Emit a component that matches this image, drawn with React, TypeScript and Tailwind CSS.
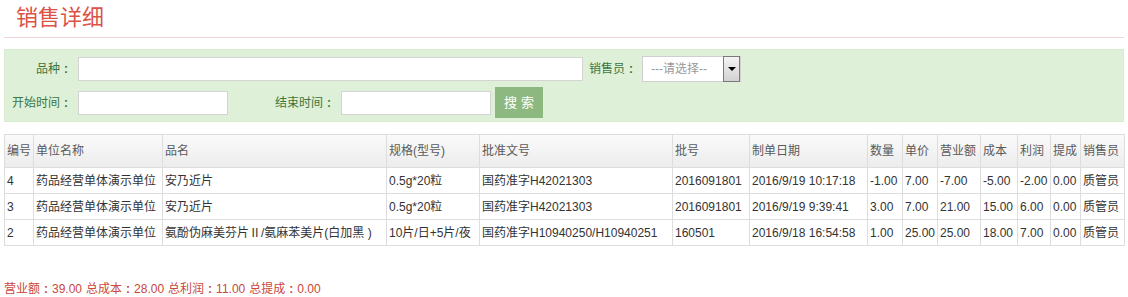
import React from 'react';

const cols = [29, 129, 224, 93, 193, 77, 118, 35, 35, 43, 37, 33, 30, 44];

const headers = ['编号', '单位名称', '品名', '规格(型号)', '批准文号', '批号', '制单日期', '数量', '单价', '营业额', '成本', '利润', '提成', '销售员'];

const rows = [
  ['4', '药品经营单体演示单位', '安乃近片', '0.5g*20粒', '国药准字H42021303', '2016091801', '2016/9/19 10:17:18', '-1.00', '7.00', '-7.00', '-5.00', '-2.00', '0.00', '质管员'],
  ['3', '药品经营单体演示单位', '安乃近片', '0.5g*20粒', '国药准字H42021303', '2016091801', '2016/9/19 9:39:41', '3.00', '7.00', '21.00', '15.00', '6.00', '0.00', '质管员'],
  ['2', '药品经营单体演示单位', '氨酚伪麻美芬片Ⅱ/氨麻苯美片(白加黑 )', '10片/日+5片/夜', '国药准字H10940250/H10940251', '160501', '2016/9/18 16:54:58', '1.00', '25.00', '25.00', '18.00', '7.00', '0.00', '质管员'],
];

const font = { fontFamily: '"Liberation Sans", "Noto Sans CJK SC", sans-serif' };

// full-width colon, centred in its cell as in the original page
const Colon = () => <span className="inline-block w-[12px] text-center font-bold">:</span>;

const Label = ({ text, className = '' }: { text: string; className?: string }) => (
  <div className={`shrink-0 text-[12px] text-[#3c763d] ${className}`}>
    {text}
    <Colon />
  </div>
);

const totals = [
  ['营业额', '39.00'],
  ['总成本', '28.00'],
  ['总利润', '11.00'],
  ['总提成', '0.00'],
];

const App = () => {
  return (
    <div className="w-[1128px] h-[297px] bg-white overflow-hidden" style={font}>
      <div className="mx-[4px] h-[38px] border-b border-[#f2d6d6]">
        <h1 className="pl-[12px] pt-[3px] text-[22px] leading-[30px] text-[#dc5246]">销售详细</h1>
      </div>

      <div className="mx-[4px] mt-[11px] border border-[#d8ebcf] bg-[#dff0d8] pt-[6px] pb-[3px]">
        <div className="flex h-[26px] items-center">
          <Label text="品种" className="w-[67px] text-right" />
          <input className="ml-[6px] h-[24px] w-[505px] border border-[#d4d4d4] bg-white outline-none" />
          <Label text="销售员" className="ml-[6px]" />
          <div className="ml-[5px] flex h-[26px] w-[99px] items-center border border-[#cfcfcf] bg-white">
            <span className="flex-1 pl-[8px] text-[12px] text-[#999]">---请选择--</span>
            <span className="flex h-[26px] w-[17px] items-center justify-center border border-[#7a7a7a] bg-gradient-to-b from-[#f4f4f4] to-[#d2d2d2]">
              <span className="h-0 w-0 border-x-[4px] border-t-[4px] border-x-transparent border-t-black" />
            </span>
          </div>
        </div>
        <div className="mt-[5px] flex h-[31px] items-center">
          <Label text="开始时间" className="w-[67px] text-right" />
          <input className="ml-[6px] h-[24px] w-[150px] border border-[#d4d4d4] bg-white outline-none" />
          <Label text="结束时间" className="ml-[47px]" />
          <input className="ml-[6px] h-[24px] w-[150px] border border-[#d4d4d4] bg-white outline-none" />
          <button className="ml-[4px] h-[31px] w-[48px] bg-[#8db880] pl-[4px] text-[13px] tracking-[4px] text-white">搜索</button>
        </div>
      </div>

      <table className="mx-[4px] mt-[12px] table-fixed border-collapse text-[12px]" style={{ width: 1120 }}>
        <colgroup>
          {cols.map((w, i) => (
            <col key={i} style={{ width: w }} />
          ))}
        </colgroup>
        <thead>
          <tr className="h-[33px] bg-gradient-to-b from-[#fafafa] to-[#ececec]">
            {headers.map((h) => (
              <th key={h} className="border border-[#dddddd] px-[2px] text-left font-normal whitespace-nowrap text-[#5a5a5a]">
                {h}
              </th>
            ))}
          </tr>
        </thead>
        <tbody>
          {rows.map((r, i) => (
            <tr key={i} className="h-[26px]">
              {r.map((c, j) => (
                <td key={j} className="border border-[#dddddd] px-[2px] whitespace-nowrap overflow-hidden text-[#333]">
                  {c}
                </td>
              ))}
            </tr>
          ))}
        </tbody>
      </table>

      <div className="mt-[35px] flex gap-[4px] px-[4px] text-[12px] leading-[16px] text-[#c9473d]">
        {totals.map(([k, v]) => (
          <span key={k}>
            {k}
            <Colon />
            {v}
          </span>
        ))}
      </div>
    </div>
  );
};

export default App;
